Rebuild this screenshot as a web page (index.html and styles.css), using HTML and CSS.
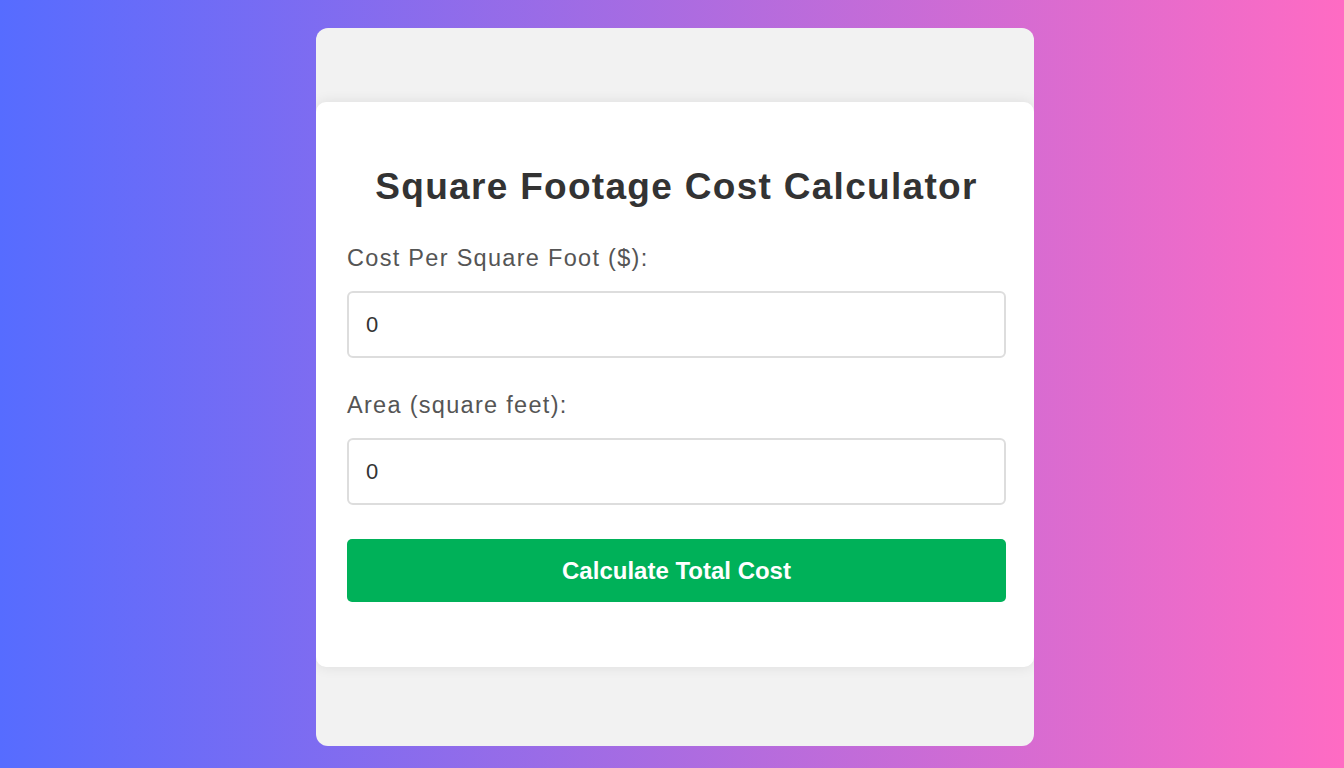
FILE: index.html
```html
<!DOCTYPE html>
<html lang="en">
<head>
<meta charset="utf-8">
<title>Square Footage Cost Calculator</title>
<link rel="stylesheet" href="styles.css">
</head>
<body>
<div class="frame">
  <div class="card">
    <h1 class="title">Square Footage Cost Calculator</h1>
    <label class="label" for="cost">Cost Per Square Foot ($):</label>
    <input class="field" id="cost" type="text" value="0">
    <label class="label" for="area">Area (square feet):</label>
    <input class="field" id="area" type="text" value="0">
    <button class="btn" type="button">Calculate Total Cost</button>
  </div>
</div>
</body>
</html>
```

FILE: styles.css
```css
html, body {
  margin: 0;
  padding: 0;
}
body {
  width: 1344px;
  height: 768px;
  background: linear-gradient(to right, #566cff, #ff6bc3);
  font-family: "Liberation Sans", Arial, sans-serif;
  padding-top: 28px;
  box-sizing: border-box;
}
.frame {
  width: 718px;
  height: 718px;
  margin-left: 316px;
  background: #f2f2f2;
  border-radius: 12px;
  padding-top: 74px;
  box-sizing: border-box;
  display: flex;
  align-items: flex-start;
  overflow: hidden;
}
.card {
  width: 100%;
  background: #fff;
  border-radius: 10px;
  box-shadow: 0 0 14px rgba(0, 0, 0, 0.09);
  padding: 64px 28px 65px 31px;
  box-sizing: border-box;
  display: flex;
  flex-direction: column;
}
.title {
  margin: 0 0 37px;
  font-size: 37px;
  line-height: 42px;
  font-weight: bold;
  letter-spacing: 1.3px;
  color: #333;
  text-align: center;
}
.label {
  font-size: 23.5px;
  line-height: 26px;
  letter-spacing: 1.3px;
  color: #555;
  margin-bottom: 20px;
}
.field {
  height: 67px;
  box-sizing: border-box;
  border: 2px solid #ddd;
  border-radius: 6px;
  padding: 0 17px;
  font-family: "Liberation Sans", Arial, sans-serif;
  font-size: 22px;
  color: #333;
  margin-bottom: 34px;
  outline: none;
}
.btn {
  height: 63px;
  border: none;
  border-radius: 5px;
  background: #00b159;
  color: #fff;
  font-family: "Liberation Sans", Arial, sans-serif;
  font-size: 24px;
  font-weight: bold;
}
```
